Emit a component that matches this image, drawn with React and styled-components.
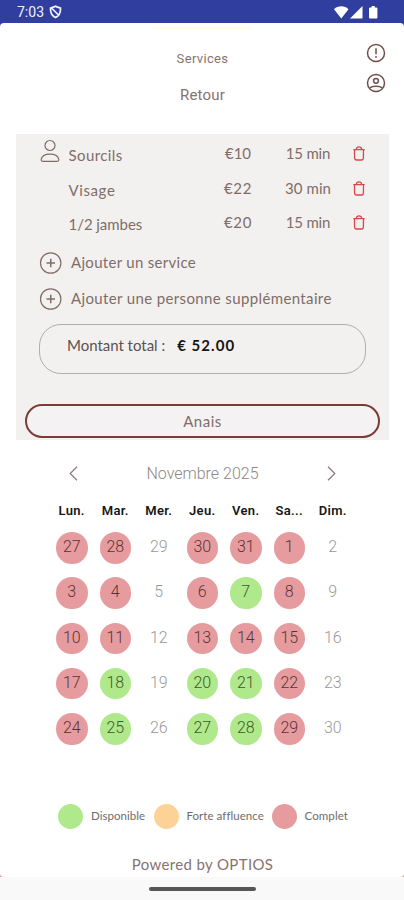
import React from "react";
import styled, { createGlobalStyle } from "styled-components";

const Global = createGlobalStyle`
  * { box-sizing: border-box; }
  body { margin: 0; background: #fff; font-family: Lato, "Open Sans", sans-serif; }
`;

const Screen = styled.main`
  width: 404px;
  height: 900px;
  overflow: hidden;
  display: flex;
  flex-direction: column;
  background: linear-gradient(#303f9f 0 50%, #c9a9a5 50%);
`;
const StatusBar = styled.header`
  height: 23px;
  flex: none;
  display: flex;
  align-items: center;
  padding: 1px 26px 0 17px;
  gap: 5px;
  background: #303f9f;
  color: #f1f2fa;
  font: 400 14px/22px Roboto, sans-serif;
`;
const Signals = styled.div`
  margin-left: auto;
  display: flex;
  align-items: center;
  svg { display: block; }
`;
const Sheet = styled.div`
  height: 854px;
  flex: none;
  background: #fff;
  border-radius: 4px;
  display: flex;
  flex-direction: column;
`;
const Masthead = styled.div`
  height: 111px;
  flex: none;
  display: grid;
  grid-template-columns: 60px 1fr 60px;
`;
const Titles = styled.div`
  grid-column: 2;
  display: flex;
  flex-direction: column;
  align-items: center;
  color: #86736f;
`;
const Strip = styled.div`
  width: 98px;
  height: 2px;
  margin: 4px 0 0;
  background: #fffde3;
`;
const Title = styled.h1`
  margin: 20px 0 0 1px;
  font: 400 13px/20px Roboto, sans-serif;
  letter-spacing: 0.35px;
`;
const Back = styled.a`
  margin: 16px 0 0 1px;
  font: 400 15px/20px Roboto, sans-serif;
  letter-spacing: 0.2px;
`;
const Actions = styled.nav`
  display: flex;
  flex-direction: column;
  gap: 9.5px;
  padding: 20px 0 0 22px;
  svg { display: block; }
`;
const Panel = styled.section`
  width: 373px;
  height: 306px;
  margin-left: 16px;
  flex: none;
  display: flex;
  flex-direction: column;
  background: #f3f1ef;
  color: #806d69;
  font-size: 15px;
`;
const ServiceRow = styled.div`
  height: 34.5px;
  flex: none;
  display: grid;
  grid-template-columns: 52px 132px 76px 64px 38px;
  line-height: 20px;
  svg { display: block; }
`;
const PersonCell = styled.span`
  padding: 5px 0 0 24px;
`;
const Name = styled.span`
  padding: 11px 0 0 0.5px;
  letter-spacing: ${(p) => p.$spacing}px;
`;
const Figure = styled.span`
  padding-top: 9px;
  text-align: center;
  letter-spacing: ${(p) => p.$spacing}px;
`;
const TrashCell = styled.span`
  padding: 12px 0 0 13px;
`;
const AddRow = styled.div`
  height: 24px;
  margin: ${(p) => p.$top}px 0 0 23px;
  display: flex;
  align-items: center;
  gap: 8px;
  letter-spacing: ${(p) => p.$spacing}px;
  line-height: 20px;
`;
const AddLabel = styled.span`
  padding-bottom: 2px;
`;
const Total = styled.div`
  width: 327px;
  height: 50px;
  margin: 13.5px 0 0 23px;
  padding: 10px 0 0 27px;
  border: 1px solid #b0adab;
  border-radius: 22px;
  display: flex;
  gap: 12px;
  color: #5b5251;
  line-height: 20px;
  letter-spacing: -0.02px;
`;
const Amount = styled.strong`
  color: #171414;
  font-weight: 700;
  letter-spacing: 1.05px;
`;
const Staff = styled.button`
  width: 355px;
  height: 34px;
  margin: 30px 0 0 9px;
  padding: 0;
  border: 2px solid #7d3a36;
  border-radius: 17px;
  background: #f4f2f3;
  color: #806d69;
  font: 400 15px/20px Lato, sans-serif;
  letter-spacing: 0.5px;
`;
const Calendar = styled.section`
  width: 305px;
  margin: 21px 0 0 50px;
  flex: none;
  font-family: Roboto, sans-serif;
`;
const MonthBar = styled.div`
  height: 25px;
  display: flex;
  align-items: center;
  justify-content: space-between;
  padding: 0 19px 0 19px;
  color: #8f8785;
  font-size: 16px;
  font-weight: 300;
  svg { display: block; }
`;
const Week = styled.div`
  display: grid;
  grid-template-columns: repeat(7, 43.5px);
  justify-items: center;
  margin-top: ${(p) => p.$top}px;
`;
const WeekDay = styled.span`
  color: #171717;
  font-size: 13px;
  font-weight: 600;
  line-height: 20px;
  letter-spacing: 0.3px;
`;
const fills = { full: "#e69c9e", free: "#b0e88c", none: "transparent" };
const inks = { full: "#5c3334", free: "#3c5a2a", none: "#999" };
const Day = styled.span`
  width: 31.5px;
  height: 31.5px;
  border-radius: 50%;
  background: ${(p) => fills[p.$state]};
  color: ${(p) => inks[p.$state]};
  font-size: 16px;
  font-weight: 300;
  line-height: 30px;
  text-align: center;
`;
const Legend = styled.ul`
  margin: 59px 0 0 58px;
  padding: 0;
  height: 25px;
  list-style: none;
  display: grid;
  grid-template-columns: 95.5px 118px 90px;
  font-size: 11.5px;
  color: #6d6d6d;
`;
const LegendItem = styled.li`
  display: flex;
  align-items: center;
  gap: 8px;
  white-space: nowrap;
  letter-spacing: ${(p) => p.$spacing}px;
`;
const LegendLabel = styled.span`
  padding-bottom: 1px;
`;
const Dot = styled.i`
  width: 25px;
  height: 25px;
  flex: none;
  border-radius: 50%;
  background: ${(p) => p.$color};
`;
const Credit = styled.footer`
  margin: 25px 0 0 1px;
  text-align: center;
  color: #86736f;
  font-size: 15px;
  line-height: 20px;
  letter-spacing: 0.36px;
`;
const NavBar = styled.div`
  height: 23px;
  flex: none;
  display: flex;
  justify-content: center;
  padding: 10px 0 0 1px;
  background: #f9f9f9;
`;
const Handle = styled.div`
  width: 107px;
  height: 4px;
  border-radius: 2px;
  background: #565656;
`;

const ShieldIcon = () => (
  <svg width="13" height="14" viewBox="0 0 13 14" fill="none" stroke="#f1f2fa" strokeWidth="1.7">
    <path d="M6.500 1.300C5 2.200 3.200 2.500 1.600 3c-.5 4.500 1 7.500 4.900 9.600 3.900-2.100 5.400-5.100 4.900-9.600C9.800 2.500 8 2.200 6.500 1.300ZM2.500 3l7.500 7.500" />
  </svg>
);
const PersonIcon = () => (
  <svg width="20" height="24" viewBox="0 0 20 24" fill="none" stroke="#806d69" strokeWidth="1.2">
    <circle cx="10" cy="6.500" r="5" />
    <path d="M3 22.400h14c1.300 0 2-.8 1.800-2-.6-3.600-4-5.300-8.800-5.300S1.800 16.800 1.200 20.400c-.2 1.200.5 2 1.800 2Z" />
  </svg>
);
const TrashIcon = () => (
  <svg width="12" height="15" viewBox="0 0 12 15" fill="none" stroke="#d4484c" strokeWidth="1.300" strokeLinejoin="round" strokeLinecap="round">
    <path d="M.8 3.600h10.400M3.300 3.400C3.500 1.600 4.500.8 6 .8s2.500.8 2.700 2.600M1.500 3.800l.1 8.300c.1 1.300.8 1.900 2 1.900h4.800c1.200 0 1.900-.6 2-1.900l.1-8.300" />
  </svg>
);
const PlusIcon = () => (
  <svg width="24" height="24" viewBox="0 0 24 24" fill="none" stroke="#806d69" strokeWidth="1.200">
    <circle cx="11.700" cy="12" r="10.200" />
    <path d="M7.500 12h8.500M11.750 7.750v8.500" strokeWidth="1.500" />
  </svg>
);
const AlertIcon = () => (
  <svg width="20" height="20" viewBox="0 0 20 20" fill="none" stroke="#704f4a" strokeWidth="1.500">
    <circle cx="10" cy="10" r="8.500" />
    <path d="M10 5.300v6M10 13v1.700" />
  </svg>
);
const AccountIcon = () => (
  <svg width="20" height="20" viewBox="0 0 20 20" fill="none" stroke="#704f4a" strokeWidth="1.500">
    <circle cx="10" cy="10" r="8.500" />
    <circle cx="10" cy="7.800" r="2.400" />
    <path d="M4.200 14.800c1-1.100 3.200-1.600 5.800-1.600s4.800.5 5.800 1.600" />
  </svg>
);
const Chevron = ({ d }) => (
  <svg width="9" height="15" viewBox="0 0 9 15" fill="none" stroke="#857b78" strokeWidth="1.200">
    <path d={d} />
  </svg>
);

const services = [
  { name: "Sourcils", spacing: 0.4, price: "€10", time: "15 min" },
  { name: "Visage", spacing: 0.6, price: "€22", time: "30 min" },
  { name: "1/2 jambes", spacing: -0.05, price: "€20", time: "15 min" },
];
const weekDays = ["Lun.", "Mar.", "Mer.", "Jeu.", "Ven.", "Sa...", "Dim."];
const weeks = [
  [27, 28, 29, 30, 31, 1, 2],
  [3, 4, 5, 6, 7, 8, 9],
  [10, 11, 12, 13, 14, 15, 16],
  [17, 18, 19, 20, 21, 22, 23],
  [24, 25, 26, 27, 28, 29, 30],
];
const available = ["1-4", "3-1", "3-3", "3-4", "4-1", "4-3", "4-4"];
const stateOf = (row, col) => {
  if (col === 2 || col === 6) return "none";
  return available.includes(`${row}-${col}`) ? "free" : "full";
};
const legend = [
  { label: "Disponible", color: "#b0e88c", spacing: 0.05 },
  { label: "Forte affluence", color: "#fdd297", spacing: 0.05 },
  { label: "Complet", color: "#e69c9e", spacing: 0.1 },
];

export default function App() {
  return (
    <Screen>
      <Global />
      <StatusBar>
        <span>7:03</span>
        <ShieldIcon />
        <Signals>
          <svg width="44" height="13" viewBox="0 0 44 13" fill="#fff">
            <path d="M0 3.200C4-.6 10.500-.6 14.500 3.200L7.250 12.500ZM28.500 0v12.500H16ZM36 1.500h1.700V0h3v1.500h1.700q1 0 1 1v9q0 1-1 1H36q-1 0-1-1v-9q0-1 1-1Z" />
          </svg>
        </Signals>
      </StatusBar>
      <Sheet>
        <Masthead>
          <Titles>
            <Strip />
            <Title>Services</Title>
            <Back>Retour</Back>
          </Titles>
          <Actions>
            <AlertIcon />
            <AccountIcon />
          </Actions>
        </Masthead>
        <Panel>
          {services.map(({ name, spacing, price, time }, i) => (
            <ServiceRow key={name}>
              <PersonCell>{i === 0 && <PersonIcon />}</PersonCell>
              <Name $spacing={spacing}>{name}</Name>
              <Figure $spacing={i === 0 ? 0 : 0.6}>{price}</Figure>
              <Figure $spacing={i === 1 ? 0.1 : -0.2}>{time}</Figure>
              <TrashCell><TrashIcon /></TrashCell>
            </ServiceRow>
          ))}
          <AddRow $top={13.5} $spacing={0.3}><PlusIcon /><AddLabel>Ajouter un service</AddLabel></AddRow>
          <AddRow $top={11.5} $spacing={0.37}><PlusIcon /><AddLabel>Ajouter une personne supplémentaire</AddLabel></AddRow>
          <Total><span>Montant total :</span><Amount>€ 52.00</Amount></Total>
          <Staff>Anais</Staff>
        </Panel>
        <Calendar>
          <MonthBar>
            <Chevron d="M8 .8 1.200 7.500 8 14.200" />
            <span>Novembre 2025</span>
            <Chevron d="M1 .8 7.800 7.500 1 14.200" />
          </MonthBar>
          <Week $top={14.5}>
            {weekDays.map((d) => <WeekDay key={d}>{d}</WeekDay>)}
          </Week>
          {weeks.map((week, row) => (
            <Week key={row} $top={row === 0 ? 11.5 : 13.75}>
              {week.map((n, col) => <Day key={n} $state={stateOf(row, col)}>{n}</Day>)}
            </Week>
          ))}
        </Calendar>
        <Legend>
          {legend.map(({ label, color, spacing }) => (
            <LegendItem key={label} $spacing={spacing}>
              <Dot $color={color} />
              <LegendLabel>{label}</LegendLabel>
            </LegendItem>
          ))}
        </Legend>
        <Credit>Powered by OPTIOS</Credit>
      </Sheet>
      <NavBar><Handle /></NavBar>
    </Screen>
  );
}
